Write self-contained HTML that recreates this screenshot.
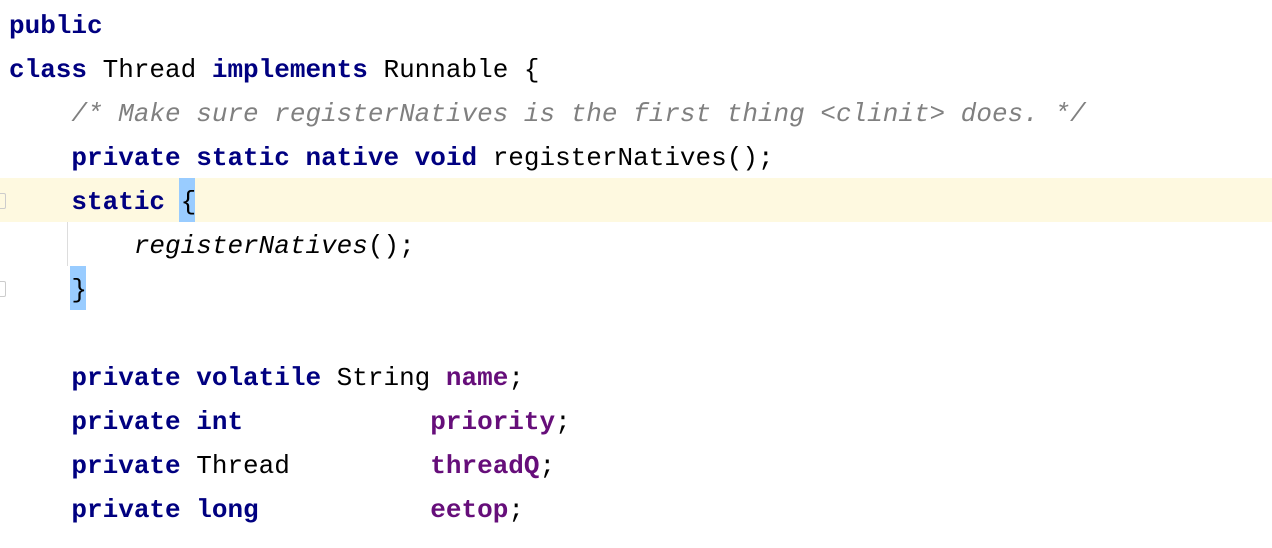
<!DOCTYPE html>
<html><head><style>
body{margin:0;width:1272px;height:548px;background:#fff;overflow:hidden;position:relative}
.l{position:absolute;left:9px;height:44px;line-height:44px;font-family:"Liberation Mono",monospace;font-size:26px;white-space:pre;color:#000;margin-top:2px}
.k{color:#000080;font-weight:bold}
.c{color:#808080;font-style:italic}
.f{color:#660e7a;font-weight:bold}
.i{font-style:italic}
.hl{position:absolute;left:0;top:178px;width:1272px;height:44px;background:#fef9e0}
.b{position:absolute;background:#99ccff;width:16px;height:44px}
</style></head><body>
<div class="hl"></div>
<div class="b" style="left:179px;top:178px"></div>
<div class="b" style="left:70px;top:266px"></div>
<div style="position:absolute;left:67px;top:222px;width:1px;height:44px;background:#ddd"></div>
<div style="position:absolute;left:0;top:193px;width:5px;height:14px;border:1px solid #ccc;border-left:none;border-radius:0 2px 2px 0"></div>
<div style="position:absolute;left:0;top:281px;width:5px;height:14px;border:1px solid #ccc;border-left:none;border-radius:0 2px 2px 0"></div>
<div class="l" style="top:2px"><span class="k">public</span></div>
<div class="l" style="top:46px"><span class="k">class</span> Thread <span class="k">implements</span> Runnable {</div>
<div class="l" style="top:90px">    <span class="c">/* Make sure registerNatives is the first thing &lt;clinit&gt; does. */</span></div>
<div class="l" style="top:134px">    <span class="k">private static native void</span> registerNatives();</div>
<div class="l" style="top:178px">    <span class="k">static</span> {</div>
<div class="l" style="top:222px">        <span class="i">registerNatives</span>();</div>
<div class="l" style="top:266px">    }</div>
<div class="l" style="top:354px">    <span class="k">private volatile</span> String <span class="f">name</span>;</div>
<div class="l" style="top:398px">    <span class="k">private int</span>            <span class="f">priority</span>;</div>
<div class="l" style="top:442px">    <span class="k">private</span> Thread         <span class="f">threadQ</span>;</div>
<div class="l" style="top:486px">    <span class="k">private long</span>           <span class="f">eetop</span>;</div>
</body></html>
